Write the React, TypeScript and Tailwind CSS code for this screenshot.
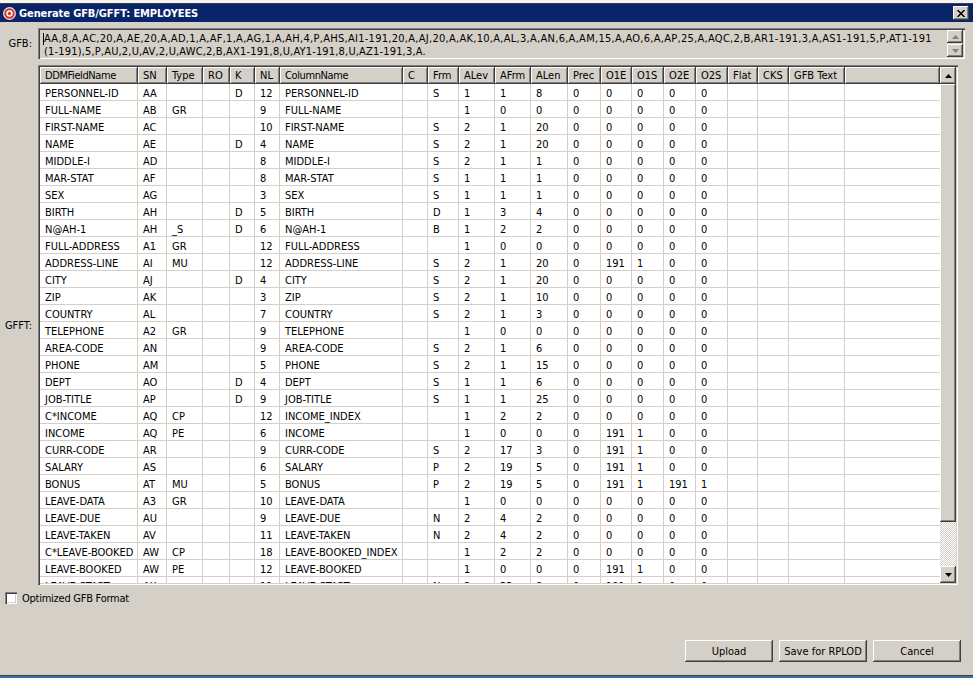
const raised = "bg-[#d4d0c8] shadow-[inset_-1px_-1px_0_#404040,inset_1px_1px_0_#ffffff,inset_-2px_-2px_0_#808080]";
const sunken = "shadow-[inset_1px_1px_0_#808080,inset_2px_2px_0_#404040,inset_-1px_-1px_0_#ffffff,inset_-2px_-2px_0_#d4d0c8]";
const cols = "grid grid-cols-[98px_29px_36px_27px_25px_25px_123px_25px_31px_36px_36px_37px_33px_31px_32px_32px_32px_30px_31px_56px_95px]";

const headers = ["DDMFieldName", "SN", "Type", "RO", "K", "NL", "ColumnName", "C", "Frm", "ALev", "AFrm", "ALen", "Prec", "O1E", "O1S", "O2E", "O2S", "Flat", "CKS", "GFB Text", ""];

// name, sn, type, k, nl, column, frm, alev, afrm, alen, o1e, o1s, o2e, o2s
const rows: string[][] = [
  ["PERSONNEL-ID", "AA", "", "D", "12", "PERSONNEL-ID", "S", "1", "1", "8", "0", "0", "0", "0"],
  ["FULL-NAME", "AB", "GR", "", "9", "FULL-NAME", "", "1", "0", "0", "0", "0", "0", "0"],
  ["FIRST-NAME", "AC", "", "", "10", "FIRST-NAME", "S", "2", "1", "20", "0", "0", "0", "0"],
  ["NAME", "AE", "", "D", "4", "NAME", "S", "2", "1", "20", "0", "0", "0", "0"],
  ["MIDDLE-I", "AD", "", "", "8", "MIDDLE-I", "S", "2", "1", "1", "0", "0", "0", "0"],
  ["MAR-STAT", "AF", "", "", "8", "MAR-STAT", "S", "1", "1", "1", "0", "0", "0", "0"],
  ["SEX", "AG", "", "", "3", "SEX", "S", "1", "1", "1", "0", "0", "0", "0"],
  ["BIRTH", "AH", "", "D", "5", "BIRTH", "D", "1", "3", "4", "0", "0", "0", "0"],
  ["N@AH-1", "AH", "_S", "D", "6", "N@AH-1", "B", "1", "2", "2", "0", "0", "0", "0"],
  ["FULL-ADDRESS", "A1", "GR", "", "12", "FULL-ADDRESS", "", "1", "0", "0", "0", "0", "0", "0"],
  ["ADDRESS-LINE", "AI", "MU", "", "12", "ADDRESS-LINE", "S", "2", "1", "20", "191", "1", "0", "0"],
  ["CITY", "AJ", "", "D", "4", "CITY", "S", "2", "1", "20", "0", "0", "0", "0"],
  ["ZIP", "AK", "", "", "3", "ZIP", "S", "2", "1", "10", "0", "0", "0", "0"],
  ["COUNTRY", "AL", "", "", "7", "COUNTRY", "S", "2", "1", "3", "0", "0", "0", "0"],
  ["TELEPHONE", "A2", "GR", "", "9", "TELEPHONE", "", "1", "0", "0", "0", "0", "0", "0"],
  ["AREA-CODE", "AN", "", "", "9", "AREA-CODE", "S", "2", "1", "6", "0", "0", "0", "0"],
  ["PHONE", "AM", "", "", "5", "PHONE", "S", "2", "1", "15", "0", "0", "0", "0"],
  ["DEPT", "AO", "", "D", "4", "DEPT", "S", "1", "1", "6", "0", "0", "0", "0"],
  ["JOB-TITLE", "AP", "", "D", "9", "JOB-TITLE", "S", "1", "1", "25", "0", "0", "0", "0"],
  ["C*INCOME", "AQ", "CP", "", "12", "INCOME_INDEX", "", "1", "2", "2", "0", "0", "0", "0"],
  ["INCOME", "AQ", "PE", "", "6", "INCOME", "", "1", "0", "0", "191", "1", "0", "0"],
  ["CURR-CODE", "AR", "", "", "9", "CURR-CODE", "S", "2", "17", "3", "191", "1", "0", "0"],
  ["SALARY", "AS", "", "", "6", "SALARY", "P", "2", "19", "5", "191", "1", "0", "0"],
  ["BONUS", "AT", "MU", "", "5", "BONUS", "P", "2", "19", "5", "191", "1", "191", "1"],
  ["LEAVE-DATA", "A3", "GR", "", "10", "LEAVE-DATA", "", "1", "0", "0", "0", "0", "0", "0"],
  ["LEAVE-DUE", "AU", "", "", "9", "LEAVE-DUE", "N", "2", "4", "2", "0", "0", "0", "0"],
  ["LEAVE-TAKEN", "AV", "", "", "11", "LEAVE-TAKEN", "N", "2", "4", "2", "0", "0", "0", "0"],
  ["C*LEAVE-BOOKED", "AW", "CP", "", "18", "LEAVE-BOOKED_INDEX", "", "1", "2", "2", "0", "0", "0", "0"],
  ["LEAVE-BOOKED", "AW", "PE", "", "12", "LEAVE-BOOKED", "", "1", "0", "0", "191", "1", "0", "0"],
  ["LEAVE-START", "AX", "", "", "11", "LEAVE-START", "N", "2", "33", "8", "191", "1", "0", "0"],
];

const toCells = (r: string[]) => [r[0], r[1], r[2], "", r[3], r[4], r[5], "", r[6], r[7], r[8], r[9], "0", r[10], r[11], r[12], r[13], "", "", "", ""];

const Arrow = ({ down, color = "#000000" }: { down?: boolean; color?: string }) => (
  <svg width="7" height="4" viewBox="0 0 7 4">
    <path d={down ? "M0 0h7L3.5 4z" : "M3.5 0L7 4H0z"} fill={color} />
  </svg>
);

const App = () => {
  return (
    <div className="w-[973px] h-[678px] flex flex-col overflow-hidden bg-[#d4d0c8] text-black text-[11px] leading-[13px] font-['DejaVu_Sans_Condensed','DejaVu_Sans',sans-serif] [font-stretch:condensed]">
      <div className="h-[4px] bg-[#f4f4f4] border-b border-[#404040]" />
      <div className="h-[18px] bg-[#0a246a] flex items-center pl-[3px] pr-[4px]">
        <svg width="13" height="13" viewBox="0 0 13 13" className="mr-[3px]">
          <circle cx="6.5" cy="6.5" r="6.5" fill="#f3dcd8" />
          <circle cx="6.5" cy="6.5" r="5.2" fill="#d8352a" />
          <circle cx="6.5" cy="6.5" r="3.2" fill="#ffffff" />
          <circle cx="6.5" cy="6.5" r="1.7" fill="#d8352a" />
        </svg>
        <span className="text-white font-bold tracking-[-0.1px]">Generate GFB/GFFT: EMPLOYEES</span>
        <div className={`ml-auto w-[16px] h-[14px] flex items-center justify-center ${raised}`}>
          <svg width="8" height="7" viewBox="0 0 8 7">
            <path d="M0.5 0L7.5 7M7.5 0L0.5 7" stroke="#000000" strokeWidth="1.5" />
          </svg>
        </div>
      </div>

      <div className="flex items-center mt-[6px] h-[31px]">
        <div className="w-[38px] pr-[6px] text-right">GFB:</div>
        <div className={`relative w-[927px] h-full bg-[#d4d0c8] pl-[6px] pt-[4px] flex ${sunken}`}>
          <div className="relative whitespace-nowrap">
            <span className="absolute -left-[1px] top-[1px] w-[1px] h-[12px] bg-black" />
            <div className="tracking-[0.28px]">AA,8,A,AC,20,A,AE,20,A,AD,1,A,AF,1,A,AG,1,A,AH,4,P,AHS,AI1-191,20,A,AJ,20,A,AK,10,A,AL,3,A,AN,6,A,AM,15,A,AO,6,A,AP,25,A,AQC,2,B,AR1-191,3,A,AS1-191,5,P,AT1-191</div>
            <div className="tracking-[0.17px]">(1-191),5,P,AU,2,U,AV,2,U,AWC,2,B,AX1-191,8,U,AY1-191,8,U,AZ1-191,3,A.</div>
          </div>
          <div className="absolute right-[2px] top-[2px] flex flex-col gap-[1px]">
            <div className={`w-[16px] h-[13px] flex items-center justify-center ${raised}`}>
              <Arrow color="#808080" />
            </div>
            <div className={`w-[16px] h-[13px] flex items-center justify-center ${raised}`}>
              <Arrow down color="#808080" />
            </div>
          </div>
        </div>
      </div>

      <div className="flex items-center mt-[6px] h-[520px]">
        <div className="w-[38px] pr-[6px] text-right">GFFT:</div>
        <div className={`w-[920px] h-full p-[2px] flex ${sunken}`}>
          <div className="w-[900px] h-full overflow-hidden bg-white">
            <div className={`${cols} h-[17px] bg-[#d4d0c8]`}>
              {headers.map((h, i) => (
                <div key={i} className={`px-[5px] flex items-center whitespace-nowrap ${i === 0 || i === 6 ? "tracking-[-0.4px]" : ""} ${raised}`}>{h}</div>
              ))}
            </div>
            {rows.map((r, i) => (
              <div key={i} className={`${cols} h-[17px]`}>
                {toCells(r).map((c, j) => (
                  <div key={j} className="pl-[5px] pt-[2px] flex items-center whitespace-nowrap overflow-hidden border-r border-b border-[#d4d0c8] last:border-r-0">{c}</div>
                ))}
              </div>
            ))}
          </div>
          <div className="w-[16px] h-full flex flex-col">
            <div className={`h-[17px] flex items-center justify-center ${raised}`}><Arrow /></div>
            <div className={`h-[438px] ${raised}`} />
            <div className="flex-1 bg-[repeating-conic-gradient(#d4d0c8_0_25%,#ffffff_0_50%)] bg-[length:2px_2px]" />
            <div className={`h-[17px] flex items-center justify-center ${raised}`}><Arrow down /></div>
          </div>
        </div>
      </div>

      <div className="flex gap-[5px] mt-[7px] ml-[5px] h-[13px]">
        <div className={`w-[12px] h-[12px] bg-white ${sunken}`} />
        <span className="tracking-[-0.25px]">Optimized GFB Format</span>
      </div>

      <div className="flex justify-end gap-[6px] mt-[35px] pr-[12px]">
        {["Upload", "Save for RPLOD", "Cancel"].map((b) => (
          <div key={b} className={`w-[88px] h-[22px] flex items-center justify-center ${raised}`}>{b}</div>
        ))}
      </div>

      <div className="mt-auto h-[3px] bg-[#3a6ea5] border-t border-[#404040]" />
    </div>
  );
};

export default App;
